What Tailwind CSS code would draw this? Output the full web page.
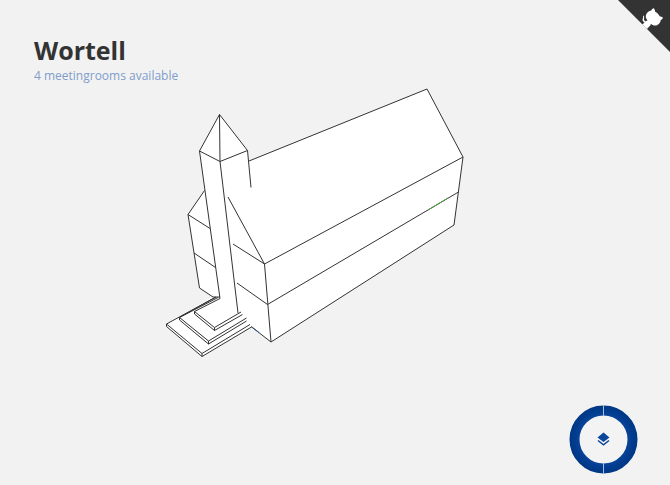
<!DOCTYPE html>
<html lang="en">
<head>
<meta charset="utf-8">
<meta name="viewport" content="width=device-width, initial-scale=1">
<title>Wortell</title>
<script src="https://cdn.jsdelivr.net/npm/@tailwindcss/browser@4"></script>
</head>
<body class="bg-[#f2f2f2] font-['Open_Sans',sans-serif]">
<main class="relative grid min-h-screen overflow-hidden">
  <svg class="col-start-1 row-start-1 h-screen w-full" viewBox="0 0 670 485" fill="none" stroke="#333" stroke-width="1" stroke-linejoin="round" role="img" aria-label="Building model">
    <path fill="#fff" stroke="none" d="M219.500 114.500L247.500 150.500L249 161L427 89L463 157L454 225L271 342L251.500 327L202 356.500L166.500 326V324L213 297L199.500 288L188 214.500L204.500 190.500L199.500 151Z"/>
    <!-- Tower -->
    <path d="M199.500 151L219.500 114.500L247.500 150.500L220 161.500L199.500 151L220 298.500M219.500 114.500L220 161.500L238 313M247.500 150.500L251 187.500"/>
    <!-- Hall -->
    <path d="M249 161L427 89L463 157L454 225L271 342L264.500 264L463 157M228 197L264.500 264L233 244M237 283L267.500 304.500L458.500 192"/>
    <path stroke="#4f9f45" d="M428 210L448 198"/>
    <path d="M271 342L251 326.500"/>
    <path stroke="#315779" d="M259 332.500L252 327"/>
    <!-- Side wing -->
    <path d="M204.500 190.500L188 214.500L210 228.500M188 214.500L199.500 288L213 297M194 253L215.500 267.500"/>
    <!-- Steps -->
    <path d="M215 297.500L166.500 324L202 353.500L250 324.500M166.500 324V326.500L202 356.500L251.500 327M202 353.500V356.500"/>
    <path d="M218 297.500L179.500 317.500L208.500 341L246.500 318M179.500 317.500V320L208.500 344L246.500 321M208.500 341V344"/>
    <path d="M220 298.500L194.500 311.500L214.500 327.500L241 312M194.500 311.500V314L214.500 330.500L242.500 314.500M214.500 327.500V330.500"/>
    <path d="M213 297H220M180 317L216 297"/>
  </svg>

  <header class="relative col-start-1 row-start-1 self-start justify-self-start px-[34px] pt-8">
    <h1 class="text-[25px] leading-9 font-bold text-[#333]">Wortell</h1>
    <p class="text-xs leading-4 text-[#7f9dcb]">4 meetingrooms available</p>
  </header>

  <a href="#" aria-label="View source on GitHub" class="absolute top-0 right-0">
    <svg class="size-[52px]" viewBox="0 0 250 250" aria-hidden="true">
      <path fill="#333" d="M0 0L250 250V0Z"/>
      <path fill="#fff" d="M128.300 109C113.800 99.700 119 89.600 119 89.600C122 82.700 120.500 78.600 120.500 78.600C119.200 72 123.400 76.300 123.400 76.300C127.300 80.900 125.500 87.300 125.500 87.300C122.900 97.600 130.600 101.900 134.400 103.200"/>
      <path fill="#fff" d="M115 115C114.900 115.100 118.700 116.500 119.800 115.400L133.700 101.600C136.900 99.200 139.900 98.400 142.200 98.600C133.800 88 127.500 74.400 143.800 58C148.500 53.400 154 51.200 159.700 51C160.300 49.400 163.200 43.600 171.400 40.100C171.400 40.100 176.100 42.500 178.800 56.200C183.100 58.600 187.200 61.800 190.900 65.400C194.500 69 197.700 73.200 200.100 77.600C213.800 80.200 216.300 84.900 216.300 84.900C212.700 93.100 206.900 96 205.400 96.600C205.100 102.400 203 107.800 198.300 112.500C181.900 128.900 168.300 122.500 157.700 114.100C157.900 116.900 156.700 120.900 152.700 124.900L141 136.500C139.800 137.700 141.600 141.900 141.800 141.800Z"/>
    </svg>
  </a>

  <button type="button" aria-label="Floors" class="absolute right-8 bottom-[11px] cursor-pointer">
    <svg class="size-[69px]" viewBox="0 0 69 69" aria-hidden="true">
      <defs>
        <radialGradient id="ring" gradientUnits="userSpaceOnUse" cx="34.500" cy="34.500" r="34.500">
          <stop offset=".7" stop-color="#084398"/>
          <stop offset=".85" stop-color="#003b8e"/>
          <stop offset="1" stop-color="#003781"/>
        </radialGradient>
      </defs>
      <circle cx="34.500" cy="34.500" r="29" fill="#f3f3f3" stroke="url(#ring)" stroke-width="10"/>
      <path d="M34.500 0V11M34.500 58V69" stroke="#a9bddb" stroke-width="1"/>
      <path fill="#0b469d" d="M34.500 27.500L40.500 32.500L34.500 37L28.500 32.500Z"/>
      <path d="M29 35.500L34.500 39.800L40 35.500" fill="none" stroke="#0b469d" stroke-width="1.500"/>
    </svg>
  </button>
</main>
</body>
</html>
